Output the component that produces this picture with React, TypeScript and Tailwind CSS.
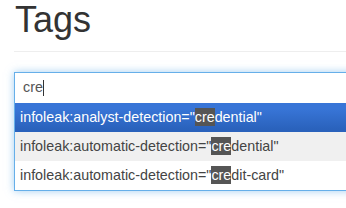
import React from "react";

const Hl = ({ children }: { children: React.ReactNode }) => (
  <span className="inline-block bg-[#555555] text-white leading-[18px]">{children}</span>
);

export default function App() {
  return (
    <div
      className="w-[346px] h-[208px] overflow-hidden bg-white"
      style={{ fontFamily: '"Liberation Sans", Arial, sans-serif' }}
    >
      <div className="pl-[14px]">
        <div className="w-[400px] border-b border-[#eeeeee] h-[52px]">
          <h1 className="text-[36px] leading-[40px] text-[#333333] pl-[1px] font-normal">Tags</h1>
        </div>
        <div className="mt-[20px] w-[400px] border border-[#66afe9] shadow-[0_0_8px_rgba(102,175,233,0.6)] bg-white">
          <div className="h-[30px] flex items-center pl-[8px] text-[14.3px] text-[#555555]">
            <span>cre</span>
            <span className="inline-block w-px h-[16px] bg-[#333333]" />
          </div>
          <div className="h-[29px] flex items-center pl-[5px] text-[14.3px] text-white bg-[linear-gradient(#3875d7_20%,#2a62bc_90%)]">
            <span>
              infoleak:analyst-detection="<Hl>cre</Hl>dential"
            </span>
          </div>
          <div className="h-[29px] flex items-center pl-[5px] text-[14.3px] text-[#444444] bg-[#f0f0f0]">
            <span>
              infoleak:automatic-detection="<Hl>cre</Hl>dential"
            </span>
          </div>
          <div className="h-[29px] flex items-center pl-[5px] text-[14.3px] text-[#444444] bg-white">
            <span>
              infoleak:automatic-detection="<Hl>cre</Hl>dit-card"
            </span>
          </div>
        </div>
      </div>
    </div>
  );
}
